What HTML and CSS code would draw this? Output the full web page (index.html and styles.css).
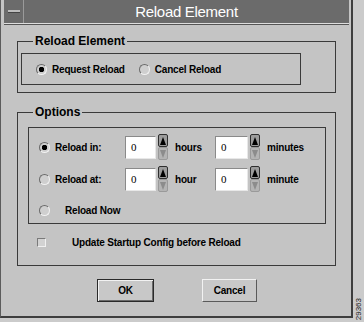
FILE: index.html
```html
<!DOCTYPE html>
<html lang="en">
<head>
    <meta charset="UTF-8">
    <meta name="viewport" content="width=device-width, initial-scale=1.0">
    <title>Reload Element</title>
    <link rel="stylesheet" href="styles.css">
</head>
<body>
    <div class="screen">
        <div class="window">
            <div class="titlebar">
                <div class="menu-btn"><span class="menu-bar"></span></div>
                <div class="title">Reload Element</div>
            </div>

            <div class="content">
                <fieldset class="group group-reload">
                    <legend>Reload Element</legend>
                    <div class="inner inner-reload">
                        <label class="radio-item"><span class="radio checked"></span>Request Reload</label>
                        <label class="radio-item cancel-item"><span class="radio"></span>Cancel Reload</label>
                    </div>
                </fieldset>

                <fieldset class="group group-options">
                    <legend>Options</legend>
                    <div class="inner inner-options">
                        <div class="opt-row row-in">
                            <label class="radio-item opt-label"><span class="radio checked"></span>Reload in:</label>
                            <div class="field field-1">0</div>
                            <div class="spinner">
                                <span class="spin up"><svg width="8" height="10" viewBox="0 0 8 10"><path d="M4 1 L7 9 L1 9 Z" fill="#000"/></svg></span>
                                <span class="spin down"><svg width="8" height="10" viewBox="0 0 8 10"><path d="M4 9 L7 1 L1 1 Z" fill="#8c8c8c"/></svg></span>
                            </div>
                            <span class="unit unit-1">hours</span>
                            <div class="field field-2">0</div>
                            <div class="spinner">
                                <span class="spin up"><svg width="8" height="10" viewBox="0 0 8 10"><path d="M4 1 L7 9 L1 9 Z" fill="#000"/></svg></span>
                                <span class="spin down"><svg width="8" height="10" viewBox="0 0 8 10"><path d="M4 9 L7 1 L1 1 Z" fill="#8c8c8c"/></svg></span>
                            </div>
                            <span class="unit">minutes</span>
                        </div>
                        <div class="opt-row row-at">
                            <label class="radio-item opt-label"><span class="radio"></span>Reload at:</label>
                            <div class="field field-1">0</div>
                            <div class="spinner">
                                <span class="spin up"><svg width="8" height="10" viewBox="0 0 8 10"><path d="M4 1 L7 9 L1 9 Z" fill="#000"/></svg></span>
                                <span class="spin down"><svg width="8" height="10" viewBox="0 0 8 10"><path d="M4 9 L7 1 L1 1 Z" fill="#8c8c8c"/></svg></span>
                            </div>
                            <span class="unit unit-1">hour</span>
                            <div class="field field-2">0</div>
                            <div class="spinner">
                                <span class="spin up"><svg width="8" height="10" viewBox="0 0 8 10"><path d="M4 1 L7 9 L1 9 Z" fill="#000"/></svg></span>
                                <span class="spin down"><svg width="8" height="10" viewBox="0 0 8 10"><path d="M4 9 L7 1 L1 1 Z" fill="#8c8c8c"/></svg></span>
                            </div>
                            <span class="unit">minute</span>
                        </div>
                        <div class="opt-row row-now">
                            <label class="radio-item now-label"><span class="radio"></span>Reload Now</label>
                        </div>
                    </div>
                    <label class="check-row"><span class="checkbox"></span>Update Startup Config before Reload</label>
                </fieldset>

                <div class="buttons">
                    <button class="btn btn-default">OK</button>
                    <button class="btn btn-cancel">Cancel</button>
                </div>
            </div>
        </div>
        <div class="side">
            <span class="fig-id">29363</span>
        </div>
    </div>
</body>
</html>
```

FILE: styles.css
```css
body, html {
    margin: 0;
    padding: 0;
    width: 100%;
    height: 100%;
    background-color: #cbcbcb;
    font-family: "Liberation Sans", Arial, sans-serif;
    color: #000;
}
.screen {
    display: flex;
    width: 364px;
    height: 322px;
}
.window {
    box-sizing: border-box;
    width: 353px;
    height: 318px;
    background-color: #c4c4c4;
    border-left: 1px solid #5c5c5c;
    border-right: 2px solid #3e3e3e;
    border-bottom: 2px solid #3e3e3e;
    padding: 0 2px 0 3px;
    display: flex;
    flex-direction: column;
}
.titlebar {
    display: flex;
    height: 23px;
    background-color: #6b6b6b;
    border-bottom: 1px solid #dedede;
    box-shadow: 0 1px 0 #555;
}
.menu-btn {
    width: 19px;
    border-right: 1px solid #9a9a9a;
    display: flex;
    align-items: center;
    justify-content: center;
}
.menu-bar {
    width: 12px;
    height: 2px;
    background-color: #bdbdbd;
    border-bottom: 1px solid #444;
}
.title {
    flex: 1;
    text-align: center;
    color: #fff;
    font-size: 15px;
    letter-spacing: -0.3px;
    line-height: 24px;
}
.content {
    padding: 0 0 0 13px;
}
.group {
    box-sizing: border-box;
    width: 319px;
    margin: 0;
    border: 1px solid #3a3a3a;
}
.group legend {
    font-size: 12px;
    font-weight: bold;
    line-height: 13px;
    padding: 0 2px;
}
.group-reload {
    margin-top: 11px;
    padding: 5px 0 7px 3px;
}
.group-reload legend {
    margin-left: 12px;
}
.inner {
    box-sizing: border-box;
    border: 1px solid #3a3a3a;
}
.inner-reload {
    width: 280px;
    height: 32px;
    display: flex;
    align-items: center;
    padding-left: 14px;
}
.radio-item {
    display: flex;
    align-items: center;
    font-size: 10px;
    letter-spacing: -0.2px;
    font-weight: bold;
}
.radio {
    box-sizing: border-box;
    width: 11px;
    height: 11px;
    border-radius: 50%;
    border: 1px solid;
    border-color: #6a6a6a #f2f2f2 #f2f2f2 #6a6a6a;
    background-color: #cfcfcf;
    margin-right: 5px;
}
.radio.checked {
    background: radial-gradient(circle, #000 0 2.5px, #cfcfcf 3px);
}
.cancel-item {
    margin-left: 14px;
}
.group-options {
    margin-top: 13px;
    padding: 8px 9px 14px 10px;
}
.group-options legend {
    margin-left: 5px;
}
.inner-options {
    height: 97px;
    padding-top: 3px;
}
.opt-row {
    display: flex;
    align-items: center;
    height: 32px;
}
.row-now {
    height: 23px;
    padding-top: 4px;
}
.opt-label {
    width: 86px;
    padding-left: 10px;
}
.now-label {
    padding-left: 10px;
}
.now-label .radio {
    margin-right: 15px;
}
.field {
    box-sizing: border-box;
    width: 31px;
    height: 23px;
    background-color: #fff;
    border: 1px solid;
    border-color: #8a8a8a #e8e8e8 #e8e8e8 #8a8a8a;
    font-size: 11px;
    line-height: 21px;
    padding-left: 5px;
    font-family: "Liberation Serif", serif;
}
.field-2 {
    width: 33px;
}
.spinner {
    display: flex;
    flex-direction: column;
    margin-left: 2px;
    width: 10px;
}
.spin {
    box-sizing: border-box;
    height: 13px;
    display: flex;
    align-items: center;
    justify-content: center;
}
.spin.up {
    background-color: #9c9c9c;
    border: 1px solid #2e2e2e;
    border-radius: 2px;
}
.spin.down {
    background-color: #b4b4b4;
    border: 1px solid #9a9a9a;
    border-radius: 2px;
}
.unit {
    font-size: 10px;
    letter-spacing: -0.2px;
    font-weight: bold;
    margin-left: 7px;
}
.unit-1 {
    width: 40px;
}
.check-row {
    display: flex;
    align-items: center;
    height: 18px;
    margin-top: 9px;
    padding-left: 9px;
    font-size: 10px;
    letter-spacing: -0.2px;
    font-weight: bold;
}
.checkbox {
    box-sizing: border-box;
    width: 9px;
    height: 9px;
    border: 1px solid;
    border-color: #7a7a7a #f0f0f0 #f0f0f0 #7a7a7a;
    background-color: #d2d2d2;
    margin-right: 26px;
}
.buttons {
    display: flex;
    margin-top: 13px;
    padding-left: 80px;
}
.btn {
    box-sizing: border-box;
    height: 23px;
    font-family: "Liberation Sans", Arial, sans-serif;
    font-size: 10px;
    letter-spacing: -0.2px;
    font-weight: bold;
    color: #000;
    background-color: #c8c8c8;
    padding: 0;
}
.btn-default {
    width: 57px;
    border: 1px solid #2a2a2a;
    box-shadow: inset 1px 1px 0 #f2f2f2, inset -1px -1px 0 #6a6a6a;
}
.btn-cancel {
    width: 55px;
    margin-left: 48px;
    border: 1px solid;
    border-color: #f2f2f2 #5a5a5a #5a5a5a #f2f2f2;
}
.side {
    flex: 1;
    display: flex;
    flex-direction: column;
    justify-content: flex-end;
    align-items: center;
}
.fig-id {
    writing-mode: vertical-rl;
    transform: rotate(180deg);
    font-size: 8px;
    line-height: 9px;
    padding-top: 2px;
    color: #222;
}
```
